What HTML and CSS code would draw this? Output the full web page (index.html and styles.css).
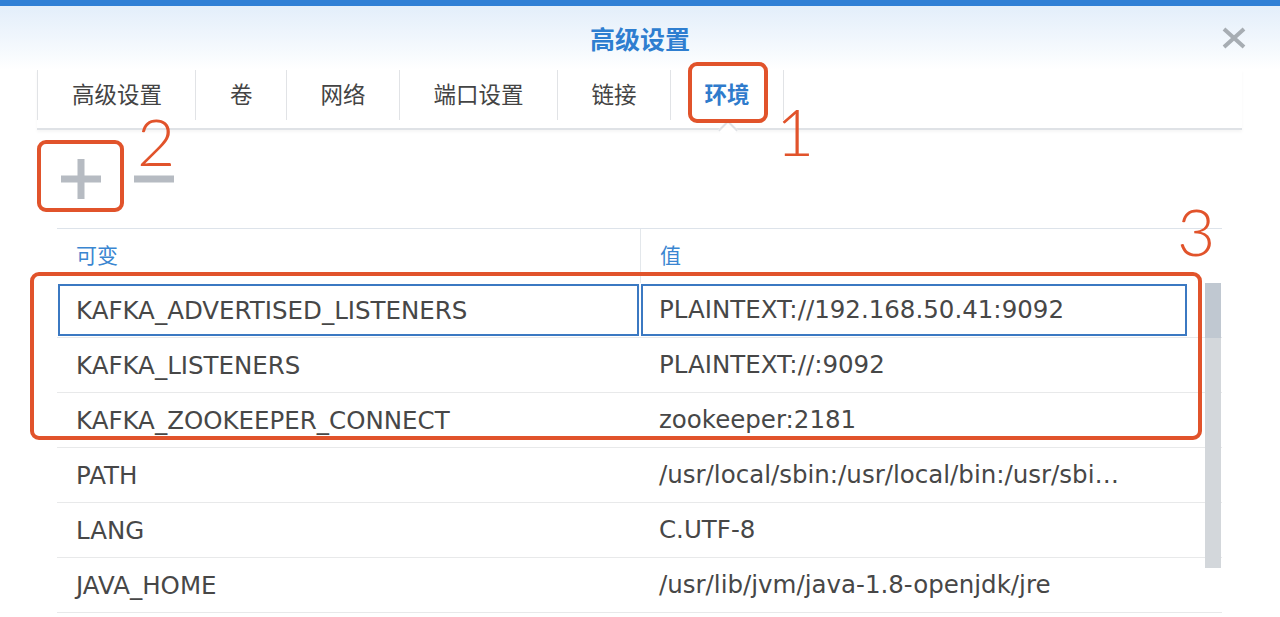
FILE: index.html
```html
<!DOCTYPE html>
<html lang="zh-CN">
<head>
  <meta charset="UTF-8" />
  <title>高级设置</title>
  <link rel="stylesheet" href="styles.css">
</head>
<body>
  <div class="topbar"></div>

  <div class="header">
    <span class="title">高级设置</span>
    <svg class="close" width="26" height="22" viewBox="0 0 26 22">
      <path d="M3 2 L23 20 M23 2 L3 20" stroke="#a7adb3" stroke-width="4" fill="none" />
    </svg>
  </div>

  <div class="tabs">
    <div class="tab">高级设置</div>
    <div class="tab">卷</div>
    <div class="tab">网络</div>
    <div class="tab">端口设置</div>
    <div class="tab">链接</div>
    <div class="tab active">环境</div>
  </div>

  <div class="toolbar">
    <svg class="tool" width="42" height="42" viewBox="0 0 42 42">
      <path d="M21 1 V41 M1 21 H41" stroke="#b6bbc2" stroke-width="7" fill="none" />
    </svg>
    <svg class="tool" width="42" height="42" viewBox="0 0 42 42">
      <path d="M1 21 H41" stroke="#b6bbc2" stroke-width="7" fill="none" />
    </svg>
  </div>

  <div class="grid">
    <div class="grid-head">
      <div class="cell key">可变</div>
      <div class="cell val">值</div>
    </div>
    <div class="grid-body">
      <div class="row selected">
        <div class="cell key">KAFKA_ADVERTISED_LISTENERS</div>
        <div class="cell val">PLAINTEXT://192.168.50.41:9092</div>
      </div>
      <div class="row">
        <div class="cell key">KAFKA_LISTENERS</div>
        <div class="cell val">PLAINTEXT://:9092</div>
      </div>
      <div class="row">
        <div class="cell key">KAFKA_ZOOKEEPER_CONNECT</div>
        <div class="cell val">zookeeper:2181</div>
      </div>
      <div class="row">
        <div class="cell key">PATH</div>
        <div class="cell val">/usr/local/sbin:/usr/local/bin:/usr/sbin:/usr/bin:/sbin:/bin</div>
      </div>
      <div class="row">
        <div class="cell key">LANG</div>
        <div class="cell val">C.UTF-8</div>
      </div>
      <div class="row">
        <div class="cell key">JAVA_HOME</div>
        <div class="cell val">/usr/lib/jvm/java-1.8-openjdk/jre</div>
      </div>
      <div class="scrollbar"><div class="thumb"></div></div>
    </div>
  </div>

  <!-- annotation marks drawn over the screenshot -->
  <div class="mark box1"></div>
  <div class="mark box2"></div>
  <div class="mark box3"></div>
  <div class="num num1">1</div>
  <div class="num num2">2</div>
  <div class="num num3">3</div>
</body>
</html>
```

FILE: styles.css
```css
body {
  margin: 0;
  background: #fff;
  color: #474747;
  font-family: "DejaVu Sans", "Noto Sans CJK SC", sans-serif;
  width: 1280px;
  height: 617px;
  overflow: hidden;
  position: relative;
}
.topbar {
  height: 6px;
  background: #2f7fd5;
}
.header {
  height: 64px;
  background: linear-gradient(#e3eefa, #f3f8fd 60%, #fff);
  display: flex;
  align-items: center;
  justify-content: center;
  position: relative;
}
.title {
  font-family: "Noto Sans CJK SC", sans-serif;
  font-size: 25px;
  font-weight: bold;
  color: #2e7ed0;
}
.close {
  position: absolute;
  right: 33px;
  top: 21px;
}
.tabs {
  display: flex;
  margin: 0 38px 0 37px;
  padding-bottom: 8px;
  border-bottom: 2px solid #dfe2e6;
  box-shadow: 0 2px 3px rgba(0, 0, 0, 0.04);
}
.tab {
  height: 50px;
  line-height: 47px;
  padding: 0 33px 0 34px;
  border-left: 1px solid #e1e3e6;
  font-family: "Noto Sans CJK SC", sans-serif;
  font-size: 22.5px;
  color: #444;
}
.tab.active {
  color: #2f7bcc;
  font-weight: bold;
  border-right: 1px solid #e1e3e6;
  position: relative;
}
.tab.active::after {
  content: "";
  position: absolute;
  left: 50%;
  bottom: -17px;
  width: 12px;
  height: 12px;
  margin-left: -6px;
  background: #fff;
  border-left: 2px solid #dfe2e6;
  border-top: 2px solid #dfe2e6;
  transform: rotate(45deg);
}
.toolbar {
  height: 98px;
  display: flex;
  align-items: center;
  gap: 31px;
  padding-left: 60px;
}
.grid {
  margin: 0 58px 0 57px;
}
.grid-head {
  display: flex;
  height: 54px;
  border-top: 1px solid #dde3ea;
}
.grid-head .cell {
  font-family: "Noto Sans CJK SC", sans-serif;
  font-size: 21px;
  color: #3a86d1;
}
.grid-head .key {
  border-right: 1px solid #e3e7eb;
}
.grid-head .cell.val {
  line-height: 50px;
}
.grid-head .cell.key {
  padding-bottom: 4px;
}
.grid-body {
  position: relative;
}
.row {
  display: flex;
  height: 54px;
  border-bottom: 1px solid #e8e9ea;
  padding-right: 34px;
}
.cell {
  display: flex;
  align-items: center;
  padding: 0 19px;
  font-size: 24.5px;
  white-space: nowrap;
  overflow: hidden;
}
.cell.key {
  width: 545px;
  flex: none;
}
.cell.val {
  flex: 1;
  min-width: 0;
  display: block;
  line-height: 53px;
  padding-right: 58px;
  text-overflow: ellipsis;
}
.row.selected .cell {
  outline: 2px solid #3b79c2;
  outline-offset: -3px;
}
.scrollbar {
  position: absolute;
  top: 0;
  right: 1px;
  width: 16px;
  height: 285px;
  background: #d3d7db;
}
.thumb {
  height: 55px;
  background: #c0c8d1;
}
.mark {
  position: absolute;
  border: 4px solid #e1532b;
  border-radius: 9px;
}
.box1 {
  left: 688px;
  top: 62px;
  width: 72px;
  height: 53px;
}
.box2 {
  left: 37px;
  top: 140px;
  width: 79px;
  height: 64px;
}
.box3 {
  left: 30px;
  top: 272px;
  width: 1164px;
  height: 160px;
}
.num {
  position: absolute;
  font-family: Lato, sans-serif;
  font-weight: 300;
  font-size: 66px;
  line-height: 66px;
  color: #e1532b;
}
.num1 {
  left: 776px;
  top: 98px;
}
.num2 {
  left: 137px;
  top: 108px;
}
.num3 {
  left: 1177px;
  top: 198px;
}
```
